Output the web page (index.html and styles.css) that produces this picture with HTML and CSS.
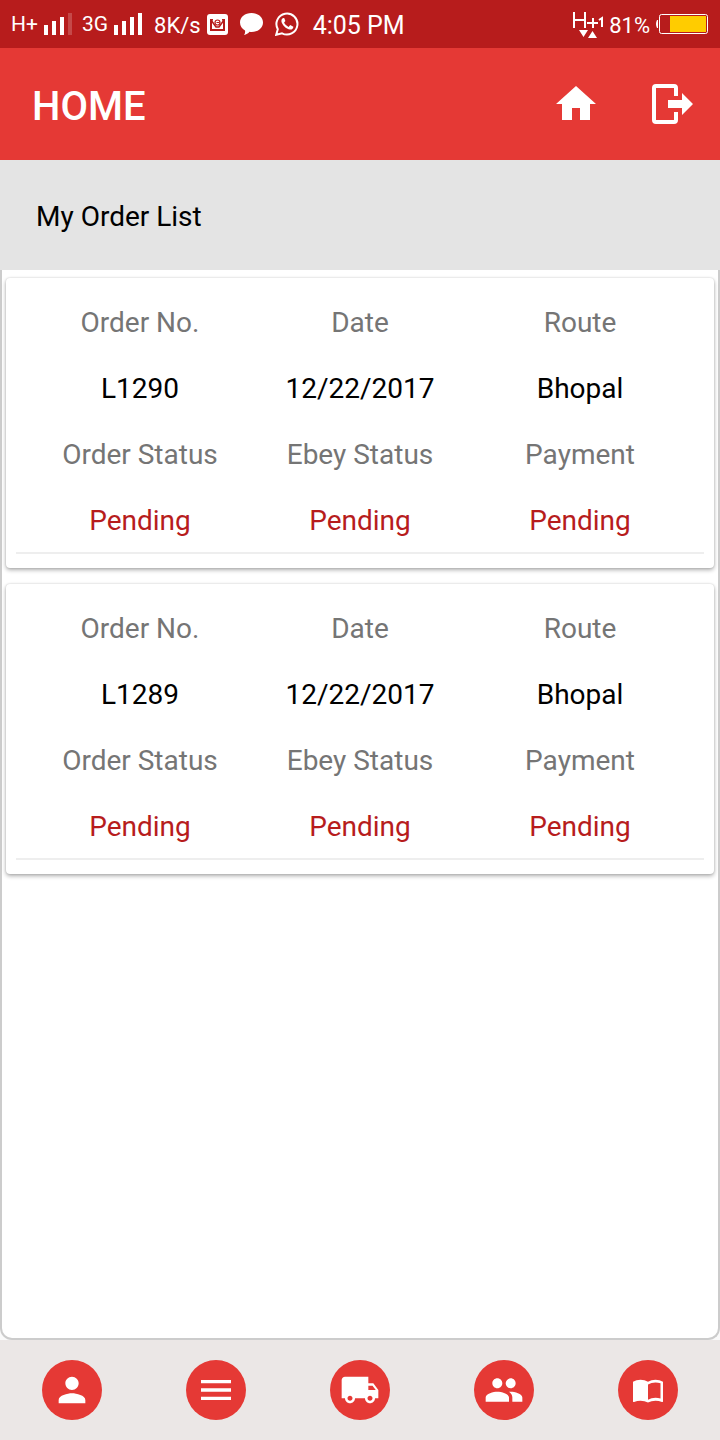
FILE: index.html
```html
<!DOCTYPE html>
<html lang="en">
<head>
<meta charset="utf-8">
<meta name="viewport" content="width=device-width, initial-scale=1">
<title>Home</title>
<link rel="stylesheet" href="styles.css">
</head>
<body>
<div class="status">
  <div class="status-group">
    <span class="net net-first">H+</span>
    <svg class="bars" viewBox="0 0 28 22" aria-hidden="true"><path d="M0 12h4v10H0zM8 8h4v14H8zM16 4h4v18h-4z"/><path opacity=".2" d="M24 0h4v22h-4z"/></svg>
    <span class="net">3G</span>
    <svg class="bars" viewBox="0 0 28 22" aria-hidden="true"><path d="M0 12h4v10H0zM8 8h4v14H8zM16 4h4v18h-4zM24 0h4v22h-4z"/></svg>
    <span class="speed">8K/s</span>
    <svg class="mail" viewBox="0 0 21 21" aria-hidden="true"><rect width="21" height="21" rx="3"/><g fill="none" stroke="#b71c1c"><path stroke-width="2" d="M4 6v10h13V6"/><path stroke-width="1.500" d="M3 5.800h3M15 5.800h3M4 6l5 7h3l5-7"/><circle cx="10.500" cy="8.500" r="2.500" stroke-width="1.200"/><path d="M9.500 8.500h3"/></g></svg>
    <svg class="bubble" viewBox="0 0 23 22" aria-hidden="true"><path d="M11.500 0C18 0 23 4 23 9.500S18 19 11.500 19q-1 0-2-.2C8 20.500 6.500 21.500 4 22q1.500-2 1-4.500C2 16 0 13 0 9.500 0 4 5 0 11.500 0z"/></svg>
    <svg class="phone" viewBox="0 0 24 24" aria-hidden="true"><path fill="none" stroke="#fff" stroke-width="2" d="M1.200 22.800l1.600-5.600A10.500 10.500 0 1 1 7 21.300z"/><path d="M8.600 6c-.8 0-2.400 1.200-2.200 3.200.3 3.200 4.800 8 8.600 8.400 2 .2 3.400-1.300 3.400-2.900l-3.200-1.700-1.600 1.900c-1.900-.7-3.700-2.400-4.500-4.300l1.300-1.500L9.200 6z"/></svg>
    <time class="clock">4:05 PM</time>
  </div>
  <div class="status-group">
    <svg class="data" viewBox="0 0 30 28" aria-hidden="true"><path fill="none" stroke="#fff" stroke-width="2" d="M1 2v16M12 2v16M1 10h11M14 13h11M20 8v10M26 10l3-2v9"/><path d="M6 20h9l-4.500 7zM15 28h9l-4.500-7z"/></svg>
    <span class="percent">81%</span>
    <svg class="battery" viewBox="0 0 52 20" aria-hidden="true"><path d="M2 6v8H1q-2-4 0-8z"/><rect x="3.500" y=".5" width="48" height="19" rx="2" fill="none" stroke="#fff"/><path fill="#fc0" d="M14 2h36v16H14z"/></svg>
  </div>
</div>
<header class="toolbar">
  <h1 class="title">HOME</h1>
  <div class="actions">
    <button class="action" type="button" aria-label="Home"><svg viewBox="0 0 24 24"><path d="M10 20v-6h4v6h5v-8h3L12 3 2 12h3v8z"/></svg></button>
    <button class="action" type="button" aria-label="Log out"><svg viewBox="0 0 48 48"><path fill="none" stroke="#fff" stroke-width="4" d="M28 16V8q0-2-2-2H8q-2 0-2 2v32q0 2 2 2h18q2 0 2-2v-8"/><path d="M20 20h14v-7l11 11-11 11v-7H20z"/></svg></button>
  </div>
</header>
<h2 class="subtitle">My Order List</h2>
<main class="orders">
  <article class="card">
    <dl class="fields">
      <div><dt>Order No.</dt><dd>L1290</dd></div>
      <div><dt>Date</dt><dd>12/22/2017</dd></div>
      <div><dt>Route</dt><dd>Bhopal</dd></div>
      <div><dt>Order Status</dt><dd class="pending">Pending</dd></div>
      <div><dt>Ebey Status</dt><dd class="pending">Pending</dd></div>
      <div><dt>Payment</dt><dd class="pending">Pending</dd></div>
    </dl>
  </article>
  <article class="card">
    <dl class="fields">
      <div><dt>Order No.</dt><dd>L1289</dd></div>
      <div><dt>Date</dt><dd>12/22/2017</dd></div>
      <div><dt>Route</dt><dd>Bhopal</dd></div>
      <div><dt>Order Status</dt><dd class="pending">Pending</dd></div>
      <div><dt>Ebey Status</dt><dd class="pending">Pending</dd></div>
      <div><dt>Payment</dt><dd class="pending">Pending</dd></div>
    </dl>
  </article>
</main>
<nav class="tabs" aria-label="Main">
  <a class="tab" href="#profile" aria-label="Profile"><svg viewBox="0 0 24 24"><path d="M12 12c2.210 0 4-1.790 4-4s-1.790-4-4-4-4 1.790-4 4 1.790 4 4 4zm0 2c-2.670 0-8 1.340-8 4v2h16v-2c0-2.660-5.330-4-8-4z"/></svg></a>
  <a class="tab" href="#orders" aria-label="Orders"><svg viewBox="0 0 24 24"><path d="M3 18h18v-2H3v2zm0-5h18v-2H3v2zm0-7v2h18V6H3z"/></svg></a>
  <a class="tab" href="#delivery" aria-label="Delivery"><svg viewBox="0 0 24 24"><path d="M20 8h-3V4H3c-1.100 0-2 .9-2 2v11h2c0 1.660 1.340 3 3 3s3-1.340 3-3h6c0 1.660 1.340 3 3 3s3-1.340 3-3h2v-5l-3-4zM6 18.500c-.83 0-1.500-.67-1.500-1.500s.67-1.500 1.500-1.500 1.500.67 1.500 1.500-.67 1.500-1.500 1.500zm13.500-9l1.960 2.500H17V9.500h2.500zm-1.500 9c-.83 0-1.500-.67-1.500-1.500s.67-1.500 1.500-1.500 1.500.67 1.500 1.500-.67 1.500-1.500 1.500z"/></svg></a>
  <a class="tab" href="#people" aria-label="People"><svg viewBox="0 0 24 24"><path d="M16 11c1.660 0 2.990-1.340 2.990-3S17.660 5 16 5c-1.660 0-3 1.340-3 3s1.340 3 3 3zm-8 0c1.660 0 2.990-1.340 2.990-3S9.660 5 8 5C6.340 5 5 6.340 5 8s1.340 3 3 3zm0 2c-2.330 0-7 1.170-7 3.500V19h14v-2.500c0-2.330-4.670-3.500-7-3.500zm8 0c-.29 0-.62.020-.97.050 1.160.84 1.970 1.970 1.970 3.450V19h6v-2.500c0-2.330-4.670-3.500-7-3.500z"/></svg></a>
  <a class="tab" href="#catalog" aria-label="Catalog"><svg viewBox="0 0 48 48"><path fill-rule="evenodd" d="M24 14q-4-2.400-9-2.400T6 14v23.500q0 1.200 1.300 1Q11 36.800 15 36.800q5 0 9 2.200 4-2.200 9-2.200 4 0 7.700 1.700 1.300.2 1.300-1V14q-4-2.400-9-2.400T24 14zm15 20.200q-3-.8-6-.8-5 0-9 2.400V17.500q4-2.400 9-2.400 3 0 6 .8z"/></svg></a>
</nav>
</body>
</html>
```
FILE: styles.css
```css
* { box-sizing: border-box; }

body {
  margin: 0;
  min-height: 100vh;
  display: flex;
  flex-direction: column;
  background: #fafafa;
  color: #000;
  font-family: Roboto, sans-serif;
  font-size: 28px;
}

svg { display: block; fill: #fff; }

.status {
  display: flex;
  justify-content: space-between;
  align-items: center;
  height: 48px;
  padding: 0 12px 0 11px;
  background: #b71c1c;
  color: #fff;
  font-size: 22px;
}
.status-group { display: flex; align-items: center; }
.net { margin: 0 6px 0 10px; font-size: 21px; }
.net-first { margin-left: 0; }
.bars { width: 28px; height: 22px; }
.speed { margin: 2px 6px 0 12px; }
.mail { width: 21px; height: 21px; }
.bubble { width: 23px; height: 22px; margin: 0 12px; }
.phone { width: 24px; height: 24px; }
.clock { margin: 2px 0 0 14px; font-size: 25px; }
.data { width: 30px; height: 28px; margin-right: 6px; }
.percent { margin: 2px 6px 0 0; }
.battery { width: 52px; height: 20px; }

.toolbar {
  display: flex;
  justify-content: space-between;
  align-items: center;
  height: 112px;
  padding: 0 24px 0 32px;
  background: #e53935;
  color: #fff;
}
.title { margin: 4px 0 0; font-size: 40px; font-weight: 500; }
.actions { display: flex; gap: 48px; }
.action { width: 48px; height: 48px; padding: 0; border: 0; background: none; }

.subtitle {
  display: flex;
  align-items: center;
  height: 110px;
  margin: 0;
  padding: 2px 36px 0;
  background: #e4e4e4;
  font-size: 28px;
  font-weight: 400;
}

.orders {
  flex: 1;
  display: flex;
  flex-direction: column;
  gap: 16px;
  padding: 8px 4px;
  border: 2px solid #ccc;
  border-top: 0;
  border-radius: 0 0 12px 12px;
  background: #fff;
}
.card {
  padding: 10px 10px 14px;
  border-radius: 4px;
  background: #fff;
  box-shadow: 0 2px 4px rgba(0, 0, 0, .32), 0 0 2px rgba(0, 0, 0, .16);
}
.fields {
  display: grid;
  grid-template-columns: repeat(3, 1fr);
  margin: 0;
  padding: 0 14px;
  border-bottom: 2px solid #eee;
  text-align: center;
  line-height: 34px;
}
.fields dt, .fields dd { margin: 0; padding: 18px 0 14px; }
.fields dt { color: #757575; }
.fields .pending { color: #b71c1c; }

.tabs {
  display: grid;
  grid-template-columns: repeat(5, 1fr);
  place-items: center;
  height: 100px;
  background: #ebe7e6;
}
.tab {
  display: grid;
  place-items: center;
  width: 60px;
  height: 60px;
  border-radius: 50%;
  background: #e53935;
}
.tab svg { width: 40px; height: 40px; }
```
